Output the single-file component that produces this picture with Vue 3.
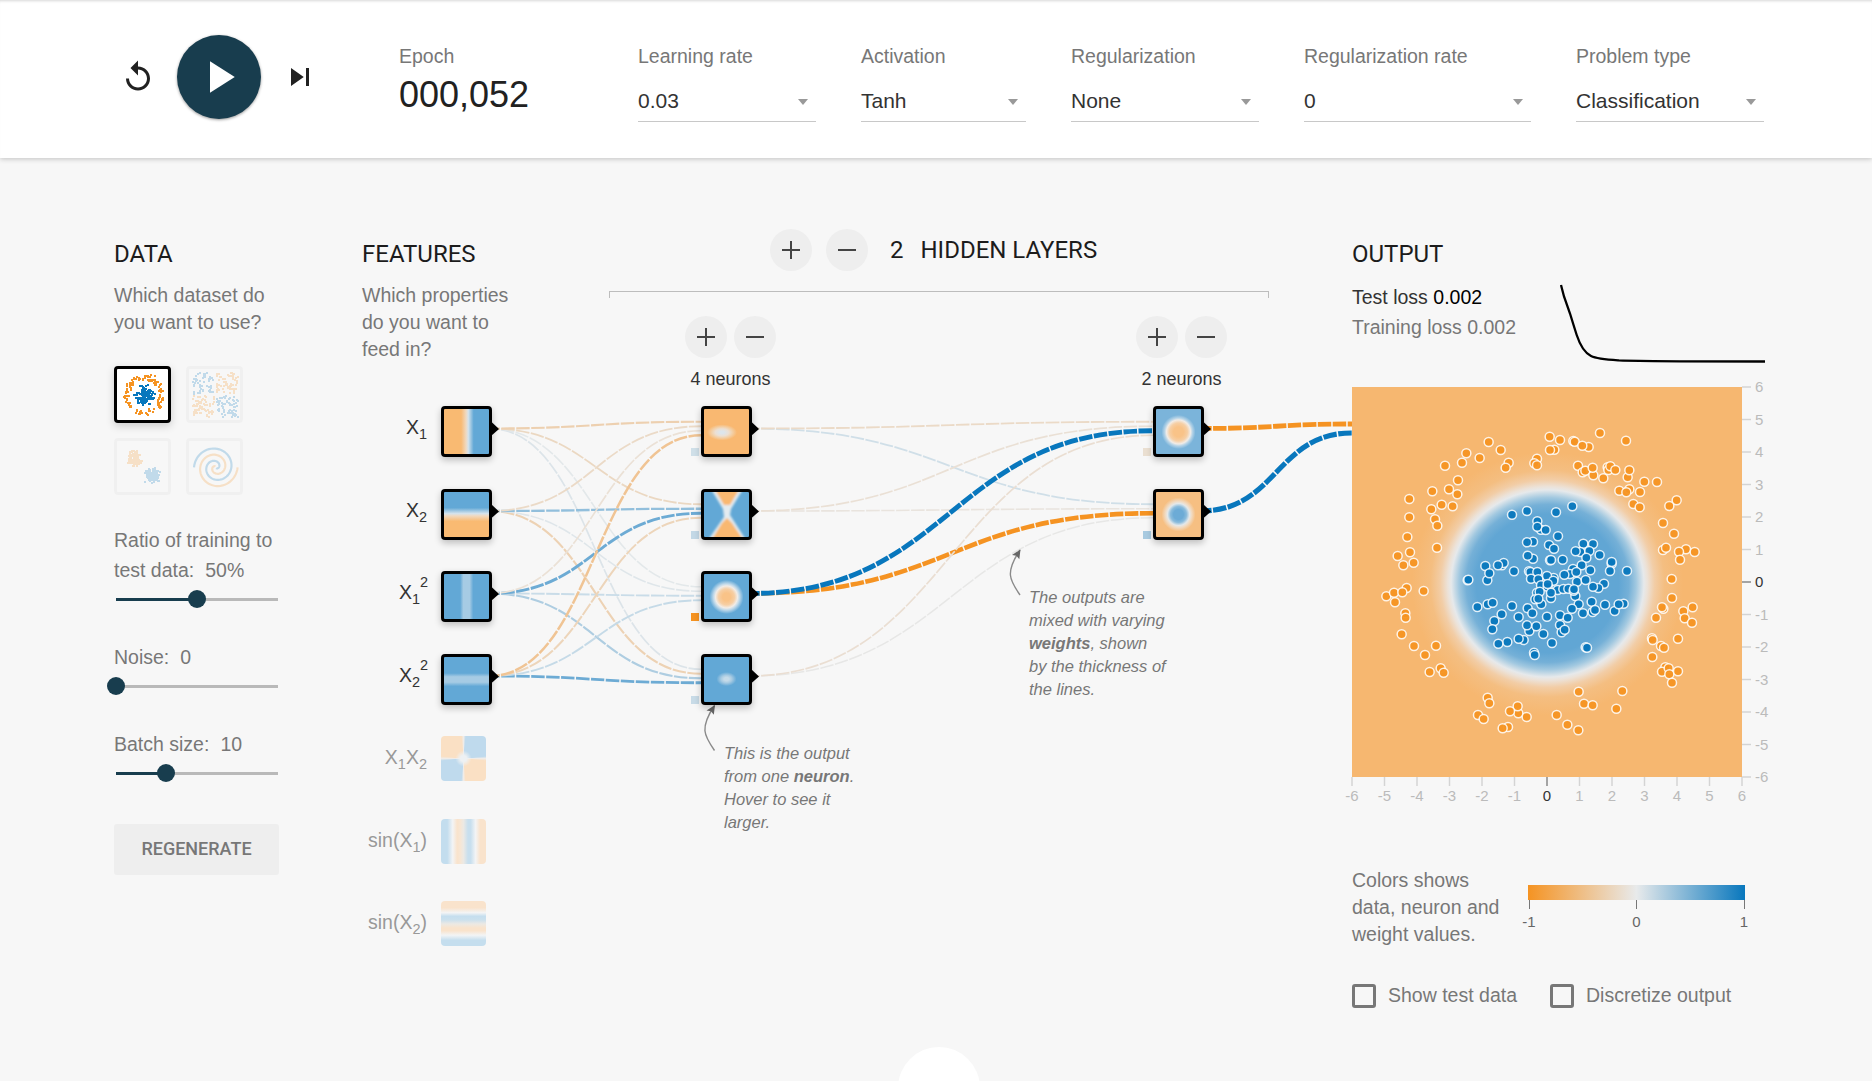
<script setup>
const selects = [
  { label: 'Learning rate', value: '0.03', cls: 'w-rate' },
  { label: 'Activation', value: 'Tanh', cls: 'w-act' },
  { label: 'Regularization', value: 'None', cls: 'w-reg' },
  { label: 'Regularization rate', value: '0', cls: 'w-regrate' },
  { label: 'Problem type', value: 'Classification', cls: 'w-prob' },
]

const sliders = [
  { lines: ['Ratio of training to', 'test data:'], value: '50%', pos: 81 },
  { lines: ['Noise:'], value: '0', pos: 0 },
  { lines: ['Batch size:'], value: '10', pos: 50 },
]

// Training points, in thirds of a pixel from the top left corner of the plot.
const toPlot = (list, dx, dy) => list.map(([x, y]) => [(x + dx) / 3, (y + dy) / 3])

const outer = [
  ...toPlot([
    [629,620],[660,630],[700,633],[704,635],[746,651],[727,647],[780,609],[858,632],[643,659],[630,660],[446,636],[482,660],
    [379,670],[366,698],[419,684],[506,698],[497,713],[591,686],[583,700],[591,706],[315,707],[354,751],[327,778],[352,793],
    [277,784],[208,807],[305,824],[338,829],[274,838],[208,862],[285,868],[292,887],[202,921],[291,953],[173,978],[210,967],
    [190,1006],[221,998],[714,707],[728,727],[736,722],[760,736],[758,713],[790,745],[803,712],[805,720],[811,709],[826,720],
    [863,742],[868,721],[913,755],[951,756],[838,782],[868,778],[859,787],[900,786],[880,822],[899,832],[1010,811],[988,828],
    [969,879],[1002,911],[969,960],[978,953],[1038,958],[1017,965],[1064,966],[1020,989],
  ], -36, -471),
  ...toPlot([
    [995,57],[139,109],[162,98],[200,84],[187,97],[251,93],[165,127],[196,160],[197,173],[185,223],[222,258],[288,257],
    [255,285],[269,336],[302,325],[311,338],[443,413],[448,430],[414,465],[431,477],[535,460],[533,439],[510,454],[560,471],
    [504,501],[488,505],[650,465],[682,494],[715,511],[716,395],[732,431],[758,436],[847,393],[829,446],[996,114],[970,146],
    [966,142],[948,173],[1030,154],[1034,175],[1058,142],[1056,188],[936,235],[938,240],[1014,236],[963,258],[972,263],
    [937,291],[976,322],[966,335],[986,325],[988,343],[1014,334],[996,368],
  ], -36, 519),
]
const inner = toPlot([
  [186,74],[231,63],[318,67],[367,49],[262,94],[273,119],[262,110],[287,120],[324,139],[249,155],[231,157],[297,165],[312,176],
  [249,206],[233,197],[300,211],[303,210],[338,209],[400,161],[429,162],[391,186],[377,184],[418,183],[409,203],[449,195],
  [106,228],[112,271],[118,250],[156,226],[161,219],[144,226],[192,244],[53,271],[55,269],[369,237],[395,226],[421,241],[485,221],
  [485,216],[480,243],[531,243],[237,244],[241,246],[262,246],[243,266],[311,264],[291,258],[265,268],[310,272],
  [360,252],[343,254],[379,246],[381,275],[407,270],[462,281],[445,294],[429,290],[273,286],[293,290],[323,300],[340,297],
  [355,296],[376,318],[371,302],[372,298],[261,308],[269,305],[303,324],[303,308],[293,282],[256,328],[274,343],[265,326],[386,343],
  [425,335],[366,356],[399,370],[428,366],[435,360],[465,344],[494,363],[521,341],[506,343],[82,351],[113,343],[128,338],
  [186,348],[233,355],[247,370],[206,381],[155,373],[133,393],[127,418],[291,380],[330,376],[353,383],[330,405],[335,427],
  [344,419],[238,423],[231,406],[259,409],[280,432],[306,459],[221,450],[206,446],[172,456],[145,461],[252,488],[254,495],
  [407,472],[411,473],
], 294, 309)

// Small datasets previews (51 x 51 canvas).
let seed = 11
const rnd = () => {
  seed = (seed * 1103515245 + 12345) % 2147483648
  return seed / 2147483648
}
const snap = (v) => Math.round(v)
const miniCircle = [
  ...outer.map(([x, y]) => ({ x: snap(27.5 + (x - 195) / 7.9), y: snap(26 + (y - 195) / 7.6), c: 'o' })),
  ...inner.map(([x, y]) => ({ x: snap(27.5 + (x - 195) / 7.9), y: snap(26 + (y - 195) / 7.6), c: 'b' })),
]
const miniXor = Array.from({ length: 240 }, () => {
  let x = rnd() * 2 - 1
  let y = rnd() * 2 - 1
  x += x > 0 ? 0.05 : -0.05
  y += y > 0 ? 0.05 : -0.05
  return { x: snap(26.5 + x * 21.5), y: snap(26 + y * 21.5), c: x * y > 0 ? 'b' : 'o' }
})
const gauss = () => (rnd() + rnd() + rnd() + rnd() - 2) * 1.7
const miniGauss = [
  ...Array.from({ length: 150 }, () => ({ x: snap(18.5 + gauss() * 3), y: snap(18 + gauss() * 3.3), c: 'o' })),
  ...Array.from({ length: 150 }, () => ({ x: snap(35.5 + gauss() * 3), y: snap(34.5 + gauss() * 3.1), c: 'b' })),
]
const spiral = (turn) => {
  const pts = []
  for (let i = 4; i <= 100; i++) {
    const r = (i / 100) * 21.8
    const t = (1.75 * i / 100) * 2 * Math.PI + turn
    pts.push(`${(26.8 + r * Math.sin(t)).toFixed(2)},${(26.3 + r * Math.cos(t)).toFixed(2)}`)
  }
  return pts.join(' ')
}
const spiralOrange = spiral(Math.PI)
const spiralBlue = spiral(0)

const thumbs = [
  { id: 'circle', pts: miniCircle, active: true },
  { id: 'xor', pts: miniXor },
  { id: 'gauss', pts: miniGauss },
  { id: 'spiral', pts: [] },
]

// Network geometry, measured from the left edge of the network block.
const rowY = (i) => 270.5 + i * 82.5
const X0 = 101.5
const X1 = 361.5
const X2 = 813.5
const weights = {
  hidden1: [
    [['#edd0b0', 2.1], ['#ebdac7', 1.8], ['#ebe1d6', 1.7], ['#f0c494', 2.5]],
    [['#ebd8c2', 1.8], ['#92bfdc', 2.3], ['#6dabd4', 2.9], ['#edd5ba', 2]],
    [['#e3e8ea', 1.6], ['#dfe6ea', 1.6], ['#c9dce8', 1.9], ['#c5dae7', 1.9]],
    [['#dce4e9', 1.7], ['#edd2b4', 2.1], ['#aecde1', 2.1], ['#6dabd4', 2.8]],
  ],
  hidden2: [
    [['#ebdac7', 1.8], ['#eae0d5', 1.7], ['#0877bd', 4.9], ['#eaded2', 1.7]],
    [['#d0dfe8', 1.8], ['#e9e4de', 1.6], ['#f59322', 4.6], ['#e7e7e6', 1.5]],
  ],
  output: [[['#f59322', 4.8], ['#0877bd', 5.2]]],
}
const links = []
const connect = (rows, sx, tx, ty) => {
  rows.forEach((inputs, j) => {
    const n = inputs.length
    inputs.forEach(([color, width], i) => {
      const a = sx + 25.5
      const ya = rowY(i)
      const b = tx - 22.5
      const yb = ty(j) + ((i - (n - 1) / 2) / n) * 18
      const m = (a + b) / 2
      links.unshift({ d: `M${a},${ya}C${m},${ya} ${m},${yb} ${b},${yb}`, color, width })
    })
  })
}
connect(weights.hidden1, X0, X1, rowY)
connect(weights.hidden2, X1, X2, rowY)
connect(weights.output, X2, 1012.5, rowY)

const features = [
  { a: 'X', sub: '1', tile: 'f-x1', on: true },
  { a: 'X', sub: '2', tile: 'f-x2', on: true },
  { a: 'X', sub: '1', sup: '2', tile: 'f-x1sq', on: true },
  { a: 'X', sub: '2', sup: '2', tile: 'f-x2sq', on: true },
  { a: 'X', sub: '1', b: 'X', sub2: '2', tile: 'f-x1x2' },
  { a: 'sin(X', sub: '1', b: ')', tile: 'f-sin1' },
  { a: 'sin(X', sub: '2', b: ')', tile: 'f-sin2' },
]
const neurons = [
  { x: 339, row: 0, tile: 'n-a', bias: '#cfdfe8' },
  { x: 339, row: 1, tile: 'n-b', bias: '#c3d8e6' },
  { x: 339, row: 2, tile: 'n-c', bias: '#f59322' },
  { x: 339, row: 3, tile: 'n-d', bias: '#c8dbe7' },
  { x: 791, row: 0, tile: 'n-e', bias: '#eadfd1' },
  { x: 791, row: 1, tile: 'n-f', bias: '#a8cae0' },
]
const nodeTop = (r) => Math.round(248 + r * 82.5)
const ticks = Array.from({ length: 13 }, (_, i) => i - 6)
</script>

<template>
  <div class="page">
    <header class="top">
      <div class="play-controls">
        <button class="icon-btn"><svg width="36" height="36" viewBox="0 0 24 24"><path d="M12 5V1L7 6l5 5V7c3.31 0 6 2.69 6 6s-2.69 6-6 6-6-2.69-6-6H4c0 4.42 3.58 8 8 8s8-3.58 8-8-3.58-8-8-8z" /></svg></button>
        <button class="play"><svg width="54" height="54" viewBox="0 0 24 24"><path d="M8 5v14l11-7z" /></svg></button>
        <button class="icon-btn"><svg width="36" height="36" viewBox="0 0 24 24"><path d="M6 18l8.500-6L6 6v12zM16 6v12h2V6h-2z" /></svg></button>
      </div>
      <div class="epoch">
        <span class="label">Epoch</span>
        <div class="iter">000,052</div>
      </div>
      <div v-for="s in selects" :key="s.label" class="control" :class="s.cls">
        <span class="label">{{ s.label }}</span>
        <div class="select"><span>{{ s.value }}</span><i class="caret"></i></div>
      </div>
    </header>

    <main class="main">
      <section class="data">
        <h4>DATA</h4>
        <p>Which dataset do<br />you want to use?</p>
        <div class="thumbs">
          <div v-for="t in thumbs" :key="t.id" class="thumb" :class="{ active: t.active }">
            <svg width="51" height="51" viewBox="0 0 51 51">
              <rect v-for="(p, i) in t.pts" :key="i" :x="p.x - 1" :y="p.y - 1" width="2" height="2" :class="p.c" />
              <template v-if="t.id === 'spiral'">
                <polyline :points="spiralOrange" class="so" />
                <polyline :points="spiralBlue" class="sb" />
              </template>
            </svg>
          </div>
        </div>
        <div v-for="s in sliders" :key="s.lines[0]" class="slider-group">
          <div v-for="(line, i) in s.lines" :key="line" class="slider-label">
            <span>{{ line }}</span><span v-if="i === s.lines.length - 1" class="val">{{ s.value }}</span>
          </div>
          <div class="slider">
            <div class="track"><div class="fill" :style="{ width: s.pos + 'px' }"></div></div>
            <div class="knob" :style="{ left: s.pos - 7 + 'px' }"></div>
          </div>
        </div>
        <button class="regen">REGENERATE</button>
      </section>

      <section class="network">
        <svg class="wires" width="990" height="923" viewBox="0 0 990 923">
          <path v-for="(l, i) in links" :key="i" :d="l.d" :stroke="l.color" :stroke-width="l.width" class="link" />
          <g v-for="(n, i) in neurons" :key="'t' + i">
            <path :d="`M${n.x + 50},${rowY(n.row) - 7}l8,7.500l-8,7z`" />
            <rect :x="n.x - 10" :y="nodeTop(n.row) + 42" width="8" height="8" :fill="n.bias" />
          </g>
          <path v-for="i in 4" :key="'f' + i" :d="`M129,${rowY(i - 1) - 7}l8,7.500l-8,7z`" />
          <g class="arrow">
            <path d="M352.500,592.500C342,577.500 337.500,570 352.500,547.500" />
            <path class="head" d="M353,547l-8.500,5.500l4.500,0.800l2.800,3.400z" />
            <path d="M658,437C647.500,422 643,414.500 658,392" />
            <path class="head" d="M658.500,391.500l-8.500,5.500l4.500,0.800l2.800,3.400z" />
          </g>
        </svg>

        <div class="features">
          <h4>FEATURES</h4>
          <p>Which properties<br />do you want to<br />feed in?</p>
        </div>

        <div class="hidden">
          <div class="layers-head">
            <button class="round"><i class="plus"></i></button>
            <button class="round"><i class="minus"></i></button>
            <span class="count">2</span>
            <span>HIDDEN LAYERS</span>
          </div>
          <div class="bracket"></div>
          <div class="layer-controls">
            <div v-for="n in [4, 2]" :key="n" class="layer">
              <div class="pair">
                <button class="round"><i class="plus"></i></button>
                <button class="round"><i class="minus"></i></button>
              </div>
              <span>{{ n }} neurons</span>
            </div>
          </div>
        </div>

        <div v-for="(f, i) in features" :key="f.tile" class="feature" :class="{ off: !f.on }" :style="{ top: nodeTop(i) + 'px' }">
          <span class="fname">{{ f.a }}<span class="ss" :class="{ sq: f.sup }"><span v-if="f.sup" class="sup">{{ f.sup }}</span><span class="sub">{{ f.sub }}</span></span>{{ f.b }}<span v-if="f.sub2" class="ss"><span class="sub">{{ f.sub2 }}</span></span></span>
          <div class="tile" :class="f.tile"></div>
        </div>
        <div v-for="n in neurons" :key="n.tile" class="neuron tile" :class="n.tile" :style="{ left: n.x + 'px', top: nodeTop(n.row) + 'px' }">
          <svg v-if="n.tile === 'n-b'" width="45" height="45" viewBox="0 0 45 45">
            <defs><filter id="soft" x="-30%" y="-30%" width="160%" height="160%"><feGaussianBlur stdDeviation="1.100" /></filter></defs>
            <g filter="url(#soft)">
              <path class="pale" d="M7,-3L39,-3L27,17L26,23L42,48L4,48L20,25L19,17z" />
              <path class="warm" d="M10,-4L36,-4L26,13L20,13z" />
              <path class="warm" d="M7,49L18,31L23,26L28,31L40,49z" />
            </g>
          </svg>
        </div>

        <div class="callout c-neuron">This is the output<br />from one <b>neuron</b>.<br />Hover to see it<br />larger.</div>
        <div class="callout c-weights">The outputs are<br />mixed with varying<br /><b>weights</b>, shown<br />by the thickness of<br />the lines.</div>
      </section>

      <section class="output">
        <h4>OUTPUT</h4>
        <div class="metrics">
          <div class="loss">
            <div class="test">Test loss <span>0.002</span></div>
            <div>Training loss 0.002</div>
          </div>
          <svg class="chart" width="210" height="84" viewBox="0 0 210 84">
            <path d="M2,3L5,14.500L11,31.500Q14.500,43 17.700,53C21,63 26,71 32,74C38,77 48,77.600 60,78.400C90,79.500 130,79.500 206,79.500" />
          </svg>
        </div>
        <svg class="plot" width="440" height="420" viewBox="0 0 440 420">
          <defs>
            <radialGradient id="heat" gradientUnits="userSpaceOnUse" cx="0" cy="0" r="140">
              <stop offset="0" stop-color="#60a6d4" />
              <stop offset="0.500" stop-color="#61a6d4" />
              <stop offset="0.570" stop-color="#75b0d7" />
              <stop offset="0.620" stop-color="#a1c8e0" />
              <stop offset="0.675" stop-color="#e6e9eb" />
              <stop offset="0.700" stop-color="#ece2d8" />
              <stop offset="0.750" stop-color="#f2cda6" />
              <stop offset="0.820" stop-color="#f4be81" />
              <stop offset="0.950" stop-color="#f6b770" />
              <stop offset="1" stop-color="#f6b770" />
            </radialGradient>
          </defs>
          <rect width="390" height="390" fill="#f6b770" />
          <ellipse cx="0" cy="0" rx="140" ry="140" fill="url(#heat)" transform="translate(195.500 196.500) scale(1.020 0.990)" />
          <circle v-for="(p, i) in outer" :key="'o' + i" :cx="p[0]" :cy="p[1]" r="4.500" class="pt o" />
          <circle v-for="(p, i) in inner" :key="'b' + i" :cx="p[0]" :cy="p[1]" r="4.500" class="pt b" />
          <g v-for="t in ticks" :key="t" class="tick" :class="{ zero: t === 0 }">
            <line :x1="195 + t * 32.5" :x2="195 + t * 32.5" y1="390" y2="399" />
            <text :x="195 + t * 32.5" y="413.500" text-anchor="middle">{{ t }}</text>
            <line x1="390" x2="399" :y1="195 - t * 32.5" :y2="195 - t * 32.5" />
            <text x="403" :y="200 - t * 32.5">{{ t }}</text>
          </g>
        </svg>
        <div class="legend">
          <p>Colors shows<br />data, neuron and<br />weight values.</p>
          <div class="scale">
            <div class="bar"></div>
            <div class="marks"><span>-1</span><span>0</span><span>1</span></div>
          </div>
        </div>
        <div class="checks">
          <label><i class="box"></i><span>Show test data</span></label>
          <label><i class="box"></i><span>Discretize output</span></label>
        </div>
      </section>
    </main>
    <div class="more"></div>
  </div>
</template>

<style>
html, body { margin: 0; overflow: hidden; background: #f7f7f7; }
</style>

<style scoped>
.page {
  position: relative; width: 1872px; height: 1081px; overflow: hidden; background: #f7f7f7;
  font-family: "Liberation Sans", Arial, sans-serif; font-size: 19.5px; line-height: 27px; color: #777;
}
button { border: 0; padding: 0; background: none; display: flex; align-items: center; justify-content: center; }
p { margin: 0; white-space: nowrap; }
h4 { margin: 0 0 13px; font: 400 24px/30px Roboto, sans-serif; color: #1c1c1c; }

.top {
  position: relative; z-index: 1; box-sizing: border-box; height: 158px; padding: 35px 0 0 120px; display: flex; align-items: flex-start;
  background: #fff; box-shadow: 0 1px 5px rgba(0,0,0,.22), inset 0 3px 3px -2px rgba(0,0,0,.16);
}
.play-controls { display: flex; align-items: center; width: 279px; flex: none; }
.icon-btn { width: 36px; height: 36px; fill: #212121; }
.play { width: 84px; height: 84px; margin: 0 21px; border-radius: 50%; background: #183d4e; fill: #fff; box-shadow: 0 1px 3px rgba(0,0,0,.4); }
.epoch { width: 239px; flex: none; padding-top: 8px; }
.label { display: block; line-height: 27px; white-space: nowrap; }
.iter { font-size: 36px; line-height: 40px; margin-top: 5px; color: #212121; }
.control { flex: none; padding-top: 8px; }
.select {
  height: 38px; margin-top: 13px; border-bottom: 1px solid #c8c8c8; display: flex; justify-content: space-between;
  align-items: flex-start; font-size: 21px; line-height: 24px; color: #333;
}
.caret { border: 5.5px solid transparent; border-top: 6px solid #999; border-bottom: 0; margin: 16px 8px 0 0; }
.select span { padding-top: 6px; }
.w-rate { width: 178px; margin-right: 45px; }
.w-act { width: 165px; margin-right: 45px; }
.w-reg { width: 188px; margin-right: 45px; }
.w-regrate { width: 227px; margin-right: 45px; }
.w-prob { width: 188px; }

.main { display: flex; height: 923px; }
.data { width: 165px; flex: none; margin-left: 114px; padding-top: 81px; }
.thumbs { display: grid; grid-template-columns: 57px 57px; gap: 15px; margin: 30px 0; }
.thumb { height: 51px; border: 3px solid #dcdcdc; border-radius: 4px; opacity: .22; }
.thumb svg { display: block; }
.thumb.active { border-color: #000; background: #fff; opacity: 1; box-shadow: 0 3px 8px rgba(0,0,0,.18); }
.o { fill: #f59322; }
.b { fill: #0877bd; }
.so, .sb { fill: none; stroke: #f59322; stroke-width: 2.2; }
.sb { stroke: #0877bd; }
.slider-group { margin-bottom: 34px; }
.slider-label { display: flex; line-height: 30px; white-space: nowrap; }
.val { margin-left: 11px; }
.slider { position: relative; height: 18px; margin: 5px 1px 0 2px; display: flex; align-items: center; }
.track { width: 162px; height: 3px; background: #b9b9b9; }
.fill { height: 3px; background: #183d4e; }
.knob { position: absolute; top: 0; width: 18px; height: 18px; margin-left: -2px; border-radius: 50%; background: #183d4e; }
.regen { width: 165px; height: 51px; margin-top: 42px; padding-bottom: 2px; border-radius: 3px; background: #eee; color: #777; font: 500 18px/49px Roboto, sans-serif; }

.network { position: relative; width: 990px; flex: none; margin-left: 83px; display: flex; }
.wires { position: absolute; left: 0; top: 0; }
.link { fill: none; stroke-dasharray: 13.5 1.5; stroke-dashoffset: 3; }
.arrow path { fill: none; stroke: #8a8a8a; stroke-width: 1.4; }
.arrow .head { fill: #666; stroke: none; }
.features { width: 247px; flex: none; padding-top: 81px; }
.hidden { width: 660px; padding-top: 71px; }
.layers-head { display: flex; gap: 14px; margin-left: 161px; font: 400 24px/43px Roboto, sans-serif; height: 42px; color: #1c1c1c; white-space: nowrap; }
.count { margin: 0 3px 0 8px; }
.round { width: 42px; height: 42px; flex: none; border-radius: 50%; background: #eee; }
.plus, .minus { width: 18px; height: 18px; background: linear-gradient(#444,#444) center / 18px 2px no-repeat; }
.plus { background: linear-gradient(#444,#444) center / 18px 2px no-repeat, linear-gradient(#444,#444) center / 2px 18px no-repeat; }
.bracket { box-sizing: border-box; height: 7px; margin-top: 20px; border: 1px solid #bdbdbd; border-bottom: 0; }
.layer-controls { display: flex; gap: 360px; margin: 18px 0 0 76px; }
.layer { display: flex; flex-direction: column; align-items: center; gap: 9px; font-size: 18px; line-height: 24px; color: #333; white-space: nowrap; }
.pair { display: flex; gap: 7px; }

.feature { position: absolute; left: 0; width: 130px; display: flex; justify-content: space-between; line-height: 42px; color: #333; }
.fname { width: 65px; display: flex; justify-content: flex-end; height: 45px; margin-right: 14px; white-space: nowrap; }
.ss { position: relative; font-size: 14.5px; }
.sub { position: relative; top: 7px; }
.sup { position: absolute; left: 8px; top: -10px; }
.sq { margin-right: 7px; }
.off { color: #999; }
.tile { box-sizing: border-box; width: 51px; height: 51px; flex: none; border: 3px solid #000; border-radius: 4px; background-origin: padding-box; box-shadow: 0 3px 7px rgba(0,0,0,.24); overflow: hidden; }
.off .tile { width: 45px; height: 45px; border: 0; box-shadow: none; margin-right: 6px; }
.neuron { position: absolute; }
.tile svg { display: block; }
.pale { fill: #e3ebf0; }
.warm { fill: #f9b871; }
.f-x1 { background: linear-gradient(90deg, #f9ba72 38%, #f0d9c0 49%, #d5e3ec 54%, #62a8d6 66%); }
.f-x2 { background: linear-gradient(#62a8d6 35%, #d5e3ec 48%, #f0d9c0 53%, #f9ba72 65%); }
.f-x1sq { background: linear-gradient(90deg, #62a8d6 36%, #a6cbe4 43%, #a6cbe4 57%, #62a8d6 65%); }
.f-x2sq { background: linear-gradient(#62a8d6 36%, #a6cbe4 44%, #a6cbe4 56%, #62a8d6 65%); }
.f-x1x2 { background: radial-gradient(circle, #eef1f3 3px, rgba(240,240,240,0) 8px), conic-gradient(#f0ece8, #bfdaed 6deg 84deg, #f0ece8 90deg, #fae0c4 96deg 174deg, #f0ece8 180deg, #bfdaed 186deg 264deg, #f0ece8 270deg, #fae0c4 276deg 354deg, #f0ece8); }
.f-sin1 { background: linear-gradient(90deg, #c3ddee 14%, #f3f4f5 26%, #f9e3cc 36%, #f7e6d4 43%, #ece9e4 50%, #c8dfee 60%, #c8dfee 66%, #f3f4f5 77%, #f9e3cc 87%); }
.f-sin2 { background: linear-gradient(#f9e3cc 15%, #f3f4f5 26%, #c5deee 34%, #cbe0ed 42%, #ece9e4 51%, #f9e3cc 60%, #f9e3cc 66%, #f3f4f5 76%, #c5deee 87%); }
.n-a { background: radial-gradient(15px 8px at 40% 52%, #dde5eb 15%, #ecdfd2 45%, #f3cfa5 70%, #f9b871 100%); }
.n-b { background: #62a8d6; }
.n-c { background: radial-gradient(circle at 50% 51%, #f9c388 4px, #f6cfa5 8px, #f1ece7 11px, #c2daea 13px, #62a8d6 17px); }
.n-d { background: radial-gradient(10px 7px at 50% 49%, #c5dbe9 25%, #a6cae2 55%, #62a8d6 100%); }
.n-e { background: radial-gradient(circle at 50% 51%, #f9c388 5px, #f6cfa5 9px, #f1ece7 12px, #b5d3e7 14px, #7bb4da 17px); }
.n-f { background: radial-gradient(circle at 50% 50%, #6cabd6 5px, #8bbcdc 8px, #e3e8ea 11px, #f1dcc5 13px, #f6bf82 17px); }
.callout { position: absolute; font-size: 16.5px; line-height: 23px; font-style: italic; color: #777; white-space: nowrap; }
.c-neuron { left: 362px; top: 584px; }
.c-weights { left: 667px; top: 428px; line-height: 22.9px; }

.output { width: 440px; flex: none; padding-top: 81px; }
.metrics { display: flex; height: 105px; line-height: 30px; }
.loss { width: 207px; flex: none; white-space: nowrap; }
.test { color: #333; }
.test span { color: #000; }
.chart path { fill: none; stroke: #000; stroke-width: 2.3; }
.plot { display: block; overflow: visible; }
.pt { stroke: #fff; stroke-width: 1.5; stroke-opacity: .85; }
.pt.o, .pt.b { fill-opacity: .95; }
.tick line { stroke: #d4d4d4; stroke-width: 1.5; }
.tick text { font-size: 15px; fill: #bbb; }
.tick.zero line { stroke: #888; }
.tick.zero text { fill: #333; }
.legend { display: flex; justify-content: space-between; width: 393px; margin-top: 60px; }
.scale { width: 217px; padding-top: 18px; }
.bar { height: 15px; background: linear-gradient(90deg, #f59322, #e8eaeb 50%, #0877bd); }
.marks { display: flex; justify-content: space-between; margin: 0 -19px; font-size: 15px; line-height: 18px; color: #666; }
.marks span { width: 40px; padding-top: 13px; text-align: center; background: linear-gradient(#777,#777) 50% 0 / 1px 9px no-repeat; }
.checks { display: flex; margin-top: 35px; }
.checks label { display: flex; align-items: center; width: 198px; white-space: nowrap; line-height: 24px; }
.checks span { padding-bottom: 2px; }
.box { box-sizing: border-box; width: 24px; height: 24px; margin-right: 12px; border: 3px solid #777; border-radius: 3px; }
.more { position: absolute; left: 898px; top: 1047px; width: 82px; height: 82px; border-radius: 50%; background: #fff; }
</style>
